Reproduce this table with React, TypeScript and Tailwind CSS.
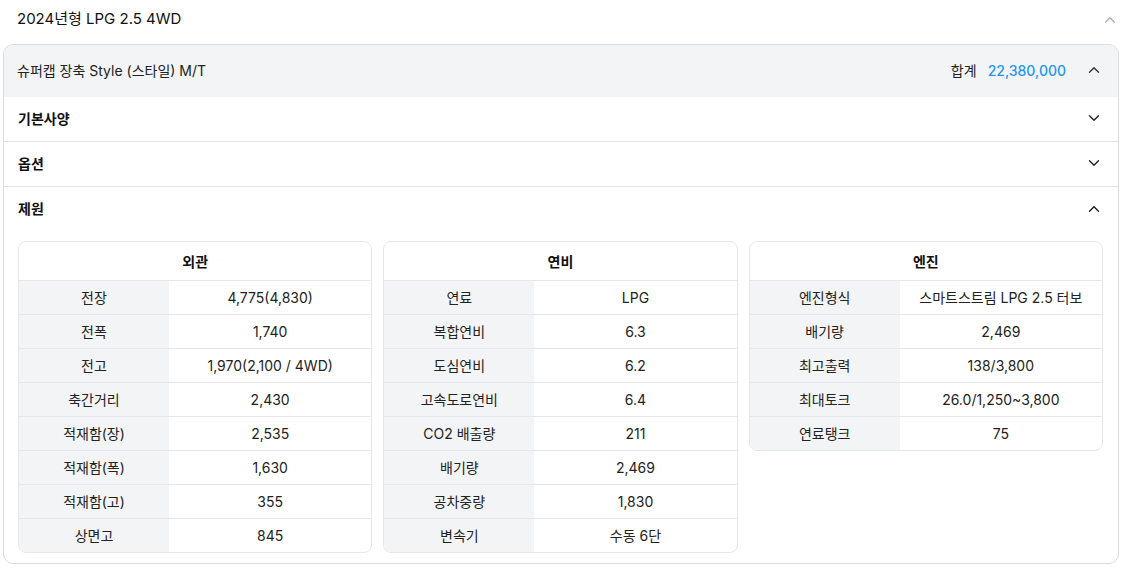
import { ChevronDown, ChevronUp } from "lucide-react";

const font = { fontFamily: '"Inter", "Noto Sans CJK KR", sans-serif' };

const tables = [
  {
    title: "외관",
    rows: [
      ["전장", "4,775(4,830)"],
      ["전폭", "1,740"],
      ["전고", "1,970(2,100 / 4WD)"],
      ["축간거리", "2,430"],
      ["적재함(장)", "2,535"],
      ["적재함(폭)", "1,630"],
      ["적재함(고)", "355"],
      ["상면고", "845"],
    ],
  },
  {
    title: "연비",
    rows: [
      ["연료", "LPG"],
      ["복합연비", "6.3"],
      ["도심연비", "6.2"],
      ["고속도로연비", "6.4"],
      ["CO2 배출량", "211"],
      ["배기량", "2,469"],
      ["공차중량", "1,830"],
      ["변속기", "수동 6단"],
    ],
  },
  {
    title: "엔진",
    rows: [
      ["엔진형식", "스마트스트림 LPG 2.5 터보"],
      ["배기량", "2,469"],
      ["최고출력", "138/3,800"],
      ["최대토크", "26.0/1,250~3,800"],
      ["연료탱크", "75"],
    ],
  },
];

function SpecTable({ title, rows }: { title: string; rows: string[][] }) {
  return (
    <div className="self-start overflow-hidden rounded-[8px] border border-[#e5e7eb] bg-white">
      <div className="flex h-[38px] items-center justify-center text-[14px] font-semibold text-[#111]">
        {title}
      </div>
      {rows.map(([k, v]) => (
        <div key={k} className="flex h-[34px] border-t border-[#e5e7eb] text-[14px] text-[#222]">
          <div className="flex w-[150px] shrink-0 items-center justify-center bg-[#f3f4f6]">{k}</div>
          <div className="flex flex-1 items-center justify-center">{v}</div>
        </div>
      ))}
    </div>
  );
}

function Section({ title, open }: { title: string; open?: boolean }) {
  return (
    <div className={`flex h-[45px] items-center justify-between pb-[2px] pl-[14px] pr-[15px] ${open ? "" : "border-b border-[#e2e2e2]"}`}>
      <span className="text-[14px] font-semibold text-[#111]">{title}</span>
      {open ? (
        <ChevronUp className="h-[18px] w-[18px] text-[#222]" strokeWidth={1.8} />
      ) : (
        <ChevronDown className="h-[18px] w-[18px] text-[#222]" strokeWidth={1.8} />
      )}
    </div>
  );
}

export default function App() {
  return (
    <div className="w-[1122px] bg-white" style={font}>
      <div className="flex h-[41px] items-center justify-between pb-[2px] pl-[17px] pr-[3px]">
        <span className="text-[15px] text-[#111]">2024년형 LPG 2.5 4WD</span>
        <ChevronUp className="h-[18px] w-[18px] text-[#aaa]" strokeWidth={1.5} />
      </div>
      <div className="mx-[3px] mt-[3px] overflow-hidden rounded-[10px] border border-[#dcdcdc]">
        <div className="flex h-[52px] items-center justify-between bg-[#f3f4f6] pb-[2px] pl-[13px] pr-[15px]">
          <span className="text-[14px] text-[#222]">슈퍼캡 장축 Style (스타일) M/T</span>
          <div className="flex items-center">
            <span className="text-[14px] text-[#222]">합계</span>
            <span className="ml-[11px] text-[14px] font-medium text-[#2196f3]">22,380,000</span>
            <ChevronUp className="ml-[19px] h-[18px] w-[18px] text-[#333]" strokeWidth={1.8} />
          </div>
        </div>
        <Section title="기본사양" />
        <Section title="옵션" />
        <Section title="제원" open />
        <div className="mt-[9px] grid grid-cols-3 gap-[11px] pb-[10px] pl-[14px] pr-[15px]">
          {tables.map((t) => (
            <SpecTable key={t.title} title={t.title} rows={t.rows} />
          ))}
        </div>
      </div>
    </div>
  );
}
